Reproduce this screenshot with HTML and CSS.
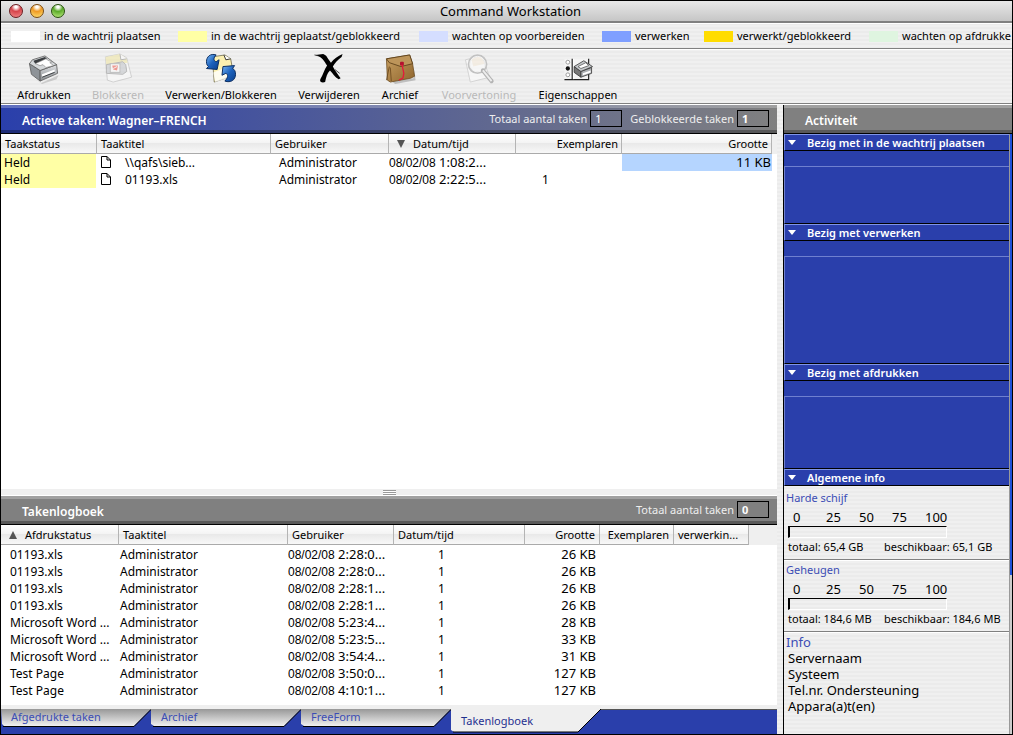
FILE: index.html
```
<!DOCTYPE html>
<html lang="nl">
<head>
<meta charset="utf-8">
<title>Command Workstation</title>
<link rel="stylesheet" href="styles.css">
</head>
<body>
<div class="window">
  <header class="titlebar">
    <div class="lights">
      <button class="light red" aria-label="Sluit"></button>
      <button class="light amber" aria-label="Minimaliseer"></button>
      <button class="light green" aria-label="Vergroot"></button>
    </div>
    <h1>Command Workstation</h1>
  </header>

  <ul class="legend">
    <li class="lg-1"><i class="swatch s-white"></i>in de wachtrij plaatsen</li>
    <li class="lg-2"><i class="swatch s-yellow"></i>in de wachtrij geplaatst/geblokkeerd</li>
    <li class="lg-3"><i class="swatch s-pale"></i>wachten op voorbereiden</li>
    <li class="lg-4"><i class="swatch s-blue"></i>verwerken</li>
    <li class="lg-5"><i class="swatch s-gold"></i>verwerkt/geblokkeerd</li>
    <li class="lg-6"><i class="swatch s-green"></i>wachten op afdrukke</li>
  </ul>

  <nav class="toolbar">
    <button class="tool t-1">
      <svg viewBox="0 0 34 32" width="34" height="32"><defs><linearGradient id="pm" x2="0" y2="1"><stop offset="0" stop-color="#e2e4e6"/><stop offset="1" stop-color="#85898d"/></linearGradient></defs>
        <path d="M5 25l9 6 18-8-2 4-15 5z" fill="#000" opacity=".15"/>
        <path d="M2 11l11 7v11L4 22z" fill="#8e9398" stroke="#555" stroke-width=".8"/>
        <path d="M13 18l17-6 1 9-18 8z" fill="url(#pm)" stroke="#555" stroke-width=".8"/>
        <path d="M2 11L5 7l13-4 12 9-17 6z" fill="#d5d8da" stroke="#555" stroke-width=".8"/>
        <path d="M6 8l12-4 2 2-12 5z" fill="#3a3d40"/>
        <path d="M8 11l11-5 3 2 4 1-3 1 4 3-8 2-3-3-3 1z" fill="#fff" stroke="#777" stroke-width=".6"/>
        <path d="M15 22l13-5v2l-13 6z" fill="#fff"/><path d="M15 25l13-5" stroke="#3a3d40"/></svg>
      <span>Afdrukken</span></button>
    <button class="tool t-2" disabled>
      <svg viewBox="0 0 34 32" width="34" height="32"><g opacity=".45">
        <path d="M4 4l15-3 7 4 5 20-19 5-6-2z" fill="#fff" stroke="#999" stroke-width=".8"/>
        <path d="M4 4l15-3 7 5 1 4-22 3z" fill="#f1e490"/><path d="M19 1l1 6 6-1" fill="#fff" stroke="#777"/>
        <path d="M5 12l17-3 3 3 1 7-4 3-17-1z" fill="#b9bdc2" stroke="#777"/>
        <rect x="9" y="11" width="10" height="9" fill="#fff" stroke="#888"/><path d="M11 13h6l-1 5-4-1z" fill="#e32"/><path d="M12 16l4-2" stroke="#fff"/></g></svg>
      <span>Blokkeren</span></button>
    <button class="tool t-3">
      <svg viewBox="0 0 34 32" width="34" height="32"><defs><linearGradient id="bl" x2="1" y2="1"><stop offset="0" stop-color="#79b7f5"/><stop offset=".5" stop-color="#1c62bd"/><stop offset="1" stop-color="#0a3f8c"/></linearGradient></defs>
        <path d="M8 4l13-2 6 4 3 17-20 7z" fill="#fbf0b0" stroke="#6c6648" stroke-width=".8"/><path d="M20 2l2 5 5-1" fill="#fff" stroke="#333"/>
        <path d="M9 20l13-5 7 9-18 6z" fill="#fff" opacity=".8"/>
        <path d="M12 2C6 0 2 4 2 9c0 3 1 4 2 5l-2 2 11 1 2-10-3 2c-3-1-3-4 0-7z" fill="url(#bl)" stroke="#082b60"/>
        <path d="M21 29c6 2 11-1 11-7 0-3-1-5-3-6l2-3-12 1-1 9 4-2c3 1 2 5-1 8z" fill="url(#bl)" stroke="#082b60"/></svg>
      <span>Verwerken/Blokkeren</span></button>
    <button class="tool t-4">
      <svg viewBox="0 0 34 32" width="34" height="32"><path d="M3 2l8-1c3 1 4 3 5 5l3 4c3-4 7-7 12-9l-1 3c-4 3-7 6-9 10 2 4 5 8 8 12l-2 1c-4-2-6-6-9-9-3 3-4 7-5 12-3 1-6 0-5-3 3-4 4-10 7-14-3-5-5-9-12-11z"/><path d="M2 2l9 2M23 17l5 4" stroke="#000" stroke-width=".7"/></svg>
      <span>Verwijderen</span></button>
    <button class="tool t-5">
      <svg viewBox="0 0 34 32" width="34" height="32"><defs><linearGradient id="br" x2="1" y2="1"><stop offset="0" stop-color="#c9a163"/><stop offset="1" stop-color="#8e642c"/></linearGradient></defs>
        <path d="M8 29l23-3 1-9 1 11-21 4z" opacity=".2"/>
        <path d="M3 6l24-4 3 9 2 13-4 2-21 4-3-2z" fill="url(#br)" stroke="#6b4a1c" stroke-width=".8"/>
        <path d="M6 14L3 28M7 15l1 14" stroke="#654318" stroke-width=".8" fill="none"/>
        <path d="M3 6l24-4 3 9-12 3L6 10z" fill="#bd955a" stroke="#513612" stroke-width=".8"/>
        <rect x="17" y="9" width="4" height="4" rx="1" fill="#b3122e"/><path d="M19 12l2 9-1 5-4 2" fill="none" stroke="#e5163c" stroke-width="1.3"/></svg>
      <span>Archief</span></button>
    <button class="tool t-6" disabled>
      <svg viewBox="0 0 34 32" width="34" height="32"><g opacity=".5">
        <path d="M3 7l17-4 8 22-20 5z" fill="#fff" stroke="#bbb"/><path d="M9 6l10-3 4 8-12 3z" fill="#f4dfc0"/>
        <circle cx="15.500" cy="11.500" r="9" fill="#fff" fill-opacity=".4" stroke="#999" stroke-width="2.400"/><circle cx="15.500" cy="11.500" r="8" fill="none" stroke="#fff"/>
        <path d="M21 18l9 11" stroke="#777" stroke-width="4.200" stroke-linecap="round"/><path d="M21 18l9 11" stroke="#eee" stroke-width="2"/></g></svg>
      <span>Voorvertoning</span></button>
    <button class="tool t-7">
      <svg viewBox="0 0 34 32" width="34" height="32">
        <path d="M3 6h24v22H3z" fill="#f4f4f4"/><path d="M11 6v21M3 27.500h25V6" fill="none" stroke="#222" stroke-width="1.200"/><path d="M12.500 6v21" stroke="#fff"/>
        <g fill="#fff" stroke="#999"><circle cx="6.500" cy="9.500" r="2"/><circle cx="6.500" cy="22.500" r="2"/></g><circle cx="6.500" cy="16" r="2.200" fill="#111"/>
        <path d="M13 14l7 5v6l-7-5z" fill="#777" stroke="#333" stroke-width=".8"/><path d="M20 19l11-4v6l-11 4z" fill="#aeb1b4" stroke="#333" stroke-width=".8"/>
        <path d="M13 14l10-6 9 6-12 5z" fill="#c6c9cc" stroke="#333" stroke-width=".8"/><path d="M17 14l8-4 3 3-8 3z" fill="#fff" stroke="#555" stroke-width=".8"/><path d="M22 21l8-3v2l-8 3z" fill="#fff"/></svg>
      <span>Eigenschappen</span></button>
  </nav>

  <main class="main">
    <div class="left">
      <section class="pane active-pane">
        <header class="pane-head blue-head">
          <h2>Actieve taken: Wagner–FRENCH</h2>
          <label for="total">Totaal aantal taken</label><input id="total" class="count" value="1" readonly>
          <label for="held" class="second">Geblokkeerde taken</label><input id="held" class="count strong" value="1" readonly>
        </header>
        <table class="jobs">
          <colgroup><col class="a1"><col class="a2"><col class="a3"><col class="a4"><col class="a5"><col class="a6"><col></colgroup>
          <thead><tr><th>Taakstatus</th><th>Taaktitel</th><th>Gebruiker</th><th class="sorted"><svg viewBox="0 0 8 8" width="8" height="8"><path d="M0 0h8L4 8z" fill="#555"/></svg>Datum/tijd</th><th class="num">Exemplaren</th><th class="num">Grootte</th><th></th></tr></thead>
          <tbody>
            <tr><td class="held">Held</td><td class="file"><svg viewBox="0 0 10 12" width="10" height="12"><path d="M.5.500h5.500l3.500 3.500v7.500h-9zM6 .500V4h3.500" fill="#fff" stroke="#000"/></svg>\\qafs\sieb...</td><td class="user">Administrator</td><td class="date"><b>08/02/08</b> 1:08:2...</td><td></td><td class="num size selected">11 KB</td><td></td></tr>
            <tr><td class="held">Held</td><td class="file"><svg viewBox="0 0 10 12" width="10" height="12"><path d="M.5.500h5.500l3.500 3.500v7.500h-9zM6 .500V4h3.500" fill="#fff" stroke="#000"/></svg>01193.xls</td><td class="user">Administrator</td><td class="date"><b>08/02/08</b> 2:22:5...</td><td class="copies">1</td><td></td><td></td></tr>
          </tbody>
        </table>
      </section>

      <div class="splitter"><i class="grip"></i></div>

      <section class="pane log-pane">
        <header class="pane-head gray-head">
          <h2>Takenlogboek</h2>
          <label for="logtotal">Totaal aantal taken</label><input id="logtotal" class="count strong" value="0" readonly>
        </header>
        <table class="jobs log">
          <colgroup><col class="b1"><col class="b2"><col class="b3"><col class="b4"><col class="b5"><col class="b6"><col class="b7"><col></colgroup>
          <thead><tr><th class="sorted"><svg viewBox="0 0 8 8" width="8" height="8"><path d="M0 8h8L4 0z" fill="#555"/></svg>Afdrukstatus</th><th>Taaktitel</th><th>Gebruiker</th><th>Datum/tijd</th><th class="num">Grootte</th><th class="num">Exemplaren</th><th>verwerkin...</th><th></th></tr></thead>
          <tbody>
            <tr><td class="name">01193.xls</td><td class="owner">Administrator</td><td class="date"><b>08/02/08</b> 2:28:0...</td><td class="one">1</td><td class="num">26 KB</td><td></td><td></td><td></td></tr>
            <tr><td class="name">01193.xls</td><td class="owner">Administrator</td><td class="date"><b>08/02/08</b> 2:28:0...</td><td class="one">1</td><td class="num">26 KB</td><td></td><td></td><td></td></tr>
            <tr><td class="name">01193.xls</td><td class="owner">Administrator</td><td class="date"><b>08/02/08</b> 2:28:1...</td><td class="one">1</td><td class="num">26 KB</td><td></td><td></td><td></td></tr>
            <tr><td class="name">01193.xls</td><td class="owner">Administrator</td><td class="date"><b>08/02/08</b> 2:28:1...</td><td class="one">1</td><td class="num">26 KB</td><td></td><td></td><td></td></tr>
            <tr><td class="name">Microsoft Word ...</td><td class="owner">Administrator</td><td class="date"><b>08/02/08</b> 5:23:4...</td><td class="one">1</td><td class="num">28 KB</td><td></td><td></td><td></td></tr>
            <tr><td class="name">Microsoft Word ...</td><td class="owner">Administrator</td><td class="date"><b>08/02/08</b> 5:23:5...</td><td class="one">1</td><td class="num">33 KB</td><td></td><td></td><td></td></tr>
            <tr><td class="name">Microsoft Word ...</td><td class="owner">Administrator</td><td class="date"><b>08/02/08</b> 3:54:4...</td><td class="one">1</td><td class="num">31 KB</td><td></td><td></td><td></td></tr>
            <tr><td class="name">Test Page</td><td class="owner">Administrator</td><td class="date"><b>08/02/08</b> 3:50:0...</td><td class="one">1</td><td class="num">127 KB</td><td></td><td></td><td></td></tr>
            <tr><td class="name">Test Page</td><td class="owner">Administrator</td><td class="date"><b>08/02/08</b> 4:10:1...</td><td class="one">1</td><td class="num">127 KB</td><td></td><td></td><td></td></tr>
          </tbody>
        </table>
      </section>

      <nav class="tabs">
        <svg width="0" height="0" class="defs"><defs><linearGradient id="tabg" x2="0" y2="1"><stop offset="0" stop-color="#989898"/><stop offset="1" stop-color="#f0f0f0"/></linearGradient></defs></svg>
        <button class="tab"><svg viewBox="0 0 151 18" width="151" height="18"><path d="M0 0h150l-17 17H3L1 15z" fill="url(#tabg)"/><path d="M150 .500l-17 17H2" fill="none" stroke="#000"/></svg><span>Afgedrukte taken</span></button>
        <button class="tab"><svg viewBox="0 0 151 18" width="151" height="18"><path d="M0 0h150l-17 17H3L0 15z" fill="url(#tabg)"/><path d="M150 .500l-17 17H2" fill="none" stroke="#000"/></svg><span>Archief</span></button>
        <button class="tab"><svg viewBox="0 0 151 18" width="151" height="18"><path d="M0 0h150l-17 17H3L0 15z" fill="url(#tabg)"/><path d="M150 .500l-17 17H2" fill="none" stroke="#000"/></svg><span>FreeForm</span></button>
        <button class="tab current"><svg viewBox="0 0 151 24" width="151" height="24"><path d="M0 0h150l-23 23H3L0 21z" fill="#efefef"/><path d="M150 0l-23 23H2" fill="none" stroke="#000"/></svg><span>Takenlogboek</span></button>
      </nav>
    </div>

    <aside class="activity">
      <header class="pane-head gray-head"><h2>Activiteit</h2></header>
      <div class="activity-row">
        <div class="sections">
          <section class="sec sec-a"><h3>Bezig met in de wachtrij plaatsen</h3><div class="box"></div></section>
          <section class="sec sec-b"><h3>Bezig met verwerken</h3><div class="box"></div></section>
          <section class="sec sec-c"><h3>Bezig met afdrukken</h3><div class="box"></div></section>
          <section class="sec"><h3>Algemene info</h3></section>
          <section class="meter">
            <h4>Harde schijf</h4>
            <div class="scale"><span>0</span><span>25</span><span>50</span><span>75</span><span>100</span></div>
            <div class="bar"></div>
            <p><span>totaal: 65,4 GB</span><span>beschikbaar: 65,1 GB</span></p>
          </section>
          <section class="meter">
            <h4>Geheugen</h4>
            <div class="scale"><span>0</span><span>25</span><span>50</span><span>75</span><span>100</span></div>
            <div class="bar"></div>
            <p><span>totaal: 184,6 MB</span><span>beschikbaar: 184,6 MB</span></p>
          </section>
          <section class="info">
            <h4>Info</h4>
            <ul><li>Servernaam</li><li>Systeem</li><li>Tel.nr. Ondersteuning</li><li>Appara(a)t(en)</li></ul>
          </section>
        </div>
        <div class="scroll"><i class="thumb"></i><i class="rest"></i></div>
      </div>
    </aside>
  </main>
</div>
</body>
</html>
```

FILE: styles.css
```
* { box-sizing: border-box; }
html, body { height: 100%; }
body { margin: 0; font: 12px/17px "Noto Sans", "Open Sans", sans-serif; color: #000; }
h1, h2, h3, h4, p, ul { margin: 0; padding: 0; font-weight: normal; }
ul { list-style: none; }
button { border: 0; padding: 0; background: none; font: inherit; color: inherit; }
i { display: block; }

.window {
  height: 100vh; display: flex; flex-direction: column; overflow: hidden;
  border: 1px solid #000;
  background: repeating-linear-gradient(#f0f0f0 0 2px, #ebebeb 2px 4px);
}

.titlebar {
  flex: none; height: 22px; display: flex; align-items: center;
  background: linear-gradient(#e8e8e8, #c6c6c6); border-bottom: 2px solid #808080;
}
.lights { flex: 1; display: flex; gap: 7px; padding-left: 8px; }
.light { width: 14px; height: 14px; border-radius: 50%; border: 1px solid #444; }
.red { background: radial-gradient(circle at 50% 15%, #fff 0 10%, #d6454b 40%, #f58f8f); border-color: #6a1c20; }
.amber { background: radial-gradient(circle at 50% 15%, #fff 0 10%, #ef9a24 40%, #ffe77a); border-color: #7a4a10; }
.green { background: radial-gradient(circle at 50% 15%, #fff 0 10%, #5bab2a 40%, #c4f088); border-color: #28500f; }
.titlebar h1 { font-size: 13px; }
.titlebar::after { content: ""; flex: 1; }

.legend { flex: none; height: 26px; display: flex; padding: 0 0 0 10px; border-top: 1px solid #fff; border-bottom: 1px solid #808080; }
.legend li { flex: none; display: flex; align-items: center; gap: 4px; white-space: nowrap; font-size: 11px; line-height: 22px; }
.swatch { width: 29px; height: 11px; }
.lg-1 { width: 167px; } .lg-2 { width: 241px; } .lg-3 { width: 183px; } .lg-4 { width: 102px; } .lg-5 { width: 165px; }
.s-white { background: #fff; } .s-yellow { background: #ffffa5; } .s-pale { background: #d5deff; }
.s-blue { background: #7f9fff; } .s-gold { background: #ffdc00; } .s-green { background: #dff5e0; }

.toolbar { flex: none; height: 55px; display: flex; padding: 3px 5px 0; border-top: 1px solid #fff; border-bottom: 1px solid #808080; }
.tool { flex: none; display: flex; flex-direction: column; align-items: center; gap: 3px; font-size: 11px; white-space: nowrap; line-height: 16px; }
.tool:disabled { color: #b9b9b9; }
.t-1 { width: 76px; } .t-2 { width: 72px; } .t-3 { width: 134px; } .t-4 { width: 82px; }
.t-5 { width: 60px; } .t-6 { width: 98px; } .t-7 { width: 100px; }

.main { flex: 1; min-height: 0; display: flex; gap: 6px; border-top: 1px solid #fff; }
.left { flex: 1; min-width: 0; display: flex; flex-direction: column; }

.pane { background: #fff; }
.active-pane { flex: 1; min-height: 0; }
.log-pane { flex: none; padding-bottom: 6px; }
.pane-head {
  height: 29px; display: flex; align-items: center; padding: 0 8px 0 21px; color: #fff;
  border-bottom: 1px solid #000; box-shadow: inset 0 3px rgba(255, 255, 255, .25), inset 0 -3px rgba(0, 0, 0, .3);
}
.pane-head h2 { flex: 1; font-size: 12px; font-weight: 600; padding-top: 2px; }
.pane-head label { font-size: 11px; margin-right: 3px; color: #eee; }
.pane-head .second { margin-left: 8px; }
.count {
  width: 32px; height: 17px; padding: 0 4px; border: 1px solid #000; background: none;
  font: 11px/15px "Noto Sans", sans-serif; color: #fff; margin-bottom: 2px;
}
.pane-head label { margin-bottom: 2px; }
.strong { font-weight: bold; }
.blue-head { background: linear-gradient(90deg, #2a3fab, #808080); }
.gray-head { background: #808080; }

.jobs { width: 100%; table-layout: fixed; border-collapse: separate; border-spacing: 0; }
.jobs th, .jobs td { padding: 0 3px; text-align: left; font-weight: normal; white-space: nowrap; overflow: hidden; height: 17px; }
.jobs th {
  height: 20px; font-size: 11px; padding: 0 3px 0 4px; border-right: 1px solid #b4b4b4; border-bottom: 1px solid #aaa;
  background: linear-gradient(#fff, #f4f4f4 45%, #e9e9e9 50%, #f8f8f8);
}
.jobs th:last-child { background: #efefef; border: 0; }
.jobs .num { text-align: right; }
.jobs td.num, .jobs .date { font-size: 13px; }
.jobs .sorted svg { margin: 0 8px 0 4px; }
.a1 { width: 96px; } .a2 { width: 174px; } .a3 { width: 118px; } .a4 { width: 127px; } .a5 { width: 106px; } .a6 { width: 150px; }
.b1 { width: 118px; } .b2 { width: 169px; } .b3 { width: 106px; } .b4 { width: 131px; } .b5 { width: 75px; } .b6 { width: 74px; } .b7 { width: 75px; }
.held { background: #ffffa5; background-clip: padding-box; border-right: 1px solid #fff; }
.jobs .file { padding-left: 4px; }
.file svg { margin-right: 14px; vertical-align: -1px; }
.jobs .user { padding-left: 8px; }
.jobs .date { padding-left: 0; padding-right: 0; }
.date b { font: 12px "Liberation Sans", sans-serif; }
.jobs .copies { padding-left: 26px; }
.jobs .size { padding-right: 1px; }
.selected { background: #b5d5ff; }
.log tbody::before { content: ""; display: block; height: 1px; }
.log .name { padding-left: 9px; padding-right: 0; }
.log .owner { padding-left: 1px; }
.log .one { padding-left: 44px; }
.log .num { padding-right: 4px; }

.splitter { flex: none; height: 7px; background: #efefef; border-bottom: 1px solid #fff; display: flex; justify-content: center; align-items: center; }
.grip { width: 13px; height: 5px; background: repeating-linear-gradient(#999 0 1px, #fff 1px 2px); }

.tabs { flex: none; height: 29px; display: flex; align-items: flex-start; background: #2a3fab; border-top: 4px solid #efefef; color: #3c4db5; box-shadow: inset 0 1px #555; }
.defs { position: absolute; }
.tab { width: 150px; height: 18px; display: grid; font-size: 11px; text-align: left; line-height: 16px; }
.tab svg, .tab span { grid-area: 1 / 1; }
.tab span { padding-left: 10px; }
.current { color: #1f2f8f; line-height: 24px; }

.activity { flex: none; width: 229px; display: flex; flex-direction: column; border-left: 1px solid #000; }
.activity .pane-head { flex: none; }
.activity-row { flex: 1; min-height: 0; display: flex; }
.sections { flex: 1; min-width: 0; }
.sec { background: #2a3fab; color: #fff; display: flex; flex-direction: column; }
.sec h3 {
  flex: none; height: 17px; display: flex; align-items: center; padding-left: 3px; font-size: 11px; font-weight: 600;
  border-top: 1px solid #7f95e8; border-left: 1px solid #7f95e8; border-bottom: 1px solid #000;
}
.sec h3::before { content: ""; border: 4px solid transparent; border-top: 5px solid #fff; border-bottom: 0; margin-right: 11px; }
.box { flex: 1; margin-top: 15px; border-top: 1px solid #6f80cf; border-left: 1px solid #6f80cf; border-bottom: 1px solid #000; }
.sec-a { height: 90px; } .sec-b { height: 140px; } .sec-c { height: 105px; }
.meter { height: 74px; padding: 3px 4px 0 2px; border-bottom: 1px solid #808080; box-shadow: 0 1px #fff; font-size: 11px; }
.meter + .meter { height: 72px; padding-top: 1px; }
.meter h4 { color: #3c4db5; height: 19px; font-size: 11px; }
.scale { display: grid; grid-template-columns: 33px 33px 33px 33px 1fr; width: 165px; height: 18px; padding-left: 7px; font-size: 13px; line-height: 18px; }
.bar { width: 159px; height: 12px; margin: 0 0 0 2px; border: 1px solid #fff; border-top-color: #000; border-left: 2px solid #000; }
.meter p { display: grid; grid-template-columns: 96px 1fr; padding-left: 2px; white-space: nowrap; }
.info { padding: 2px; font-size: 13px; line-height: 16px; }
.info h4 { color: #3c4db5; font-size: 13px; }
.info ul { padding-left: 2px; }
.scroll { flex: none; width: 3px; display: flex; flex-direction: column; border-left: 1px solid #999; background: #fff; }
.thumb { flex: 441; background: #1f50d8; }
.rest { flex: 159; background: #ccc; }
```
